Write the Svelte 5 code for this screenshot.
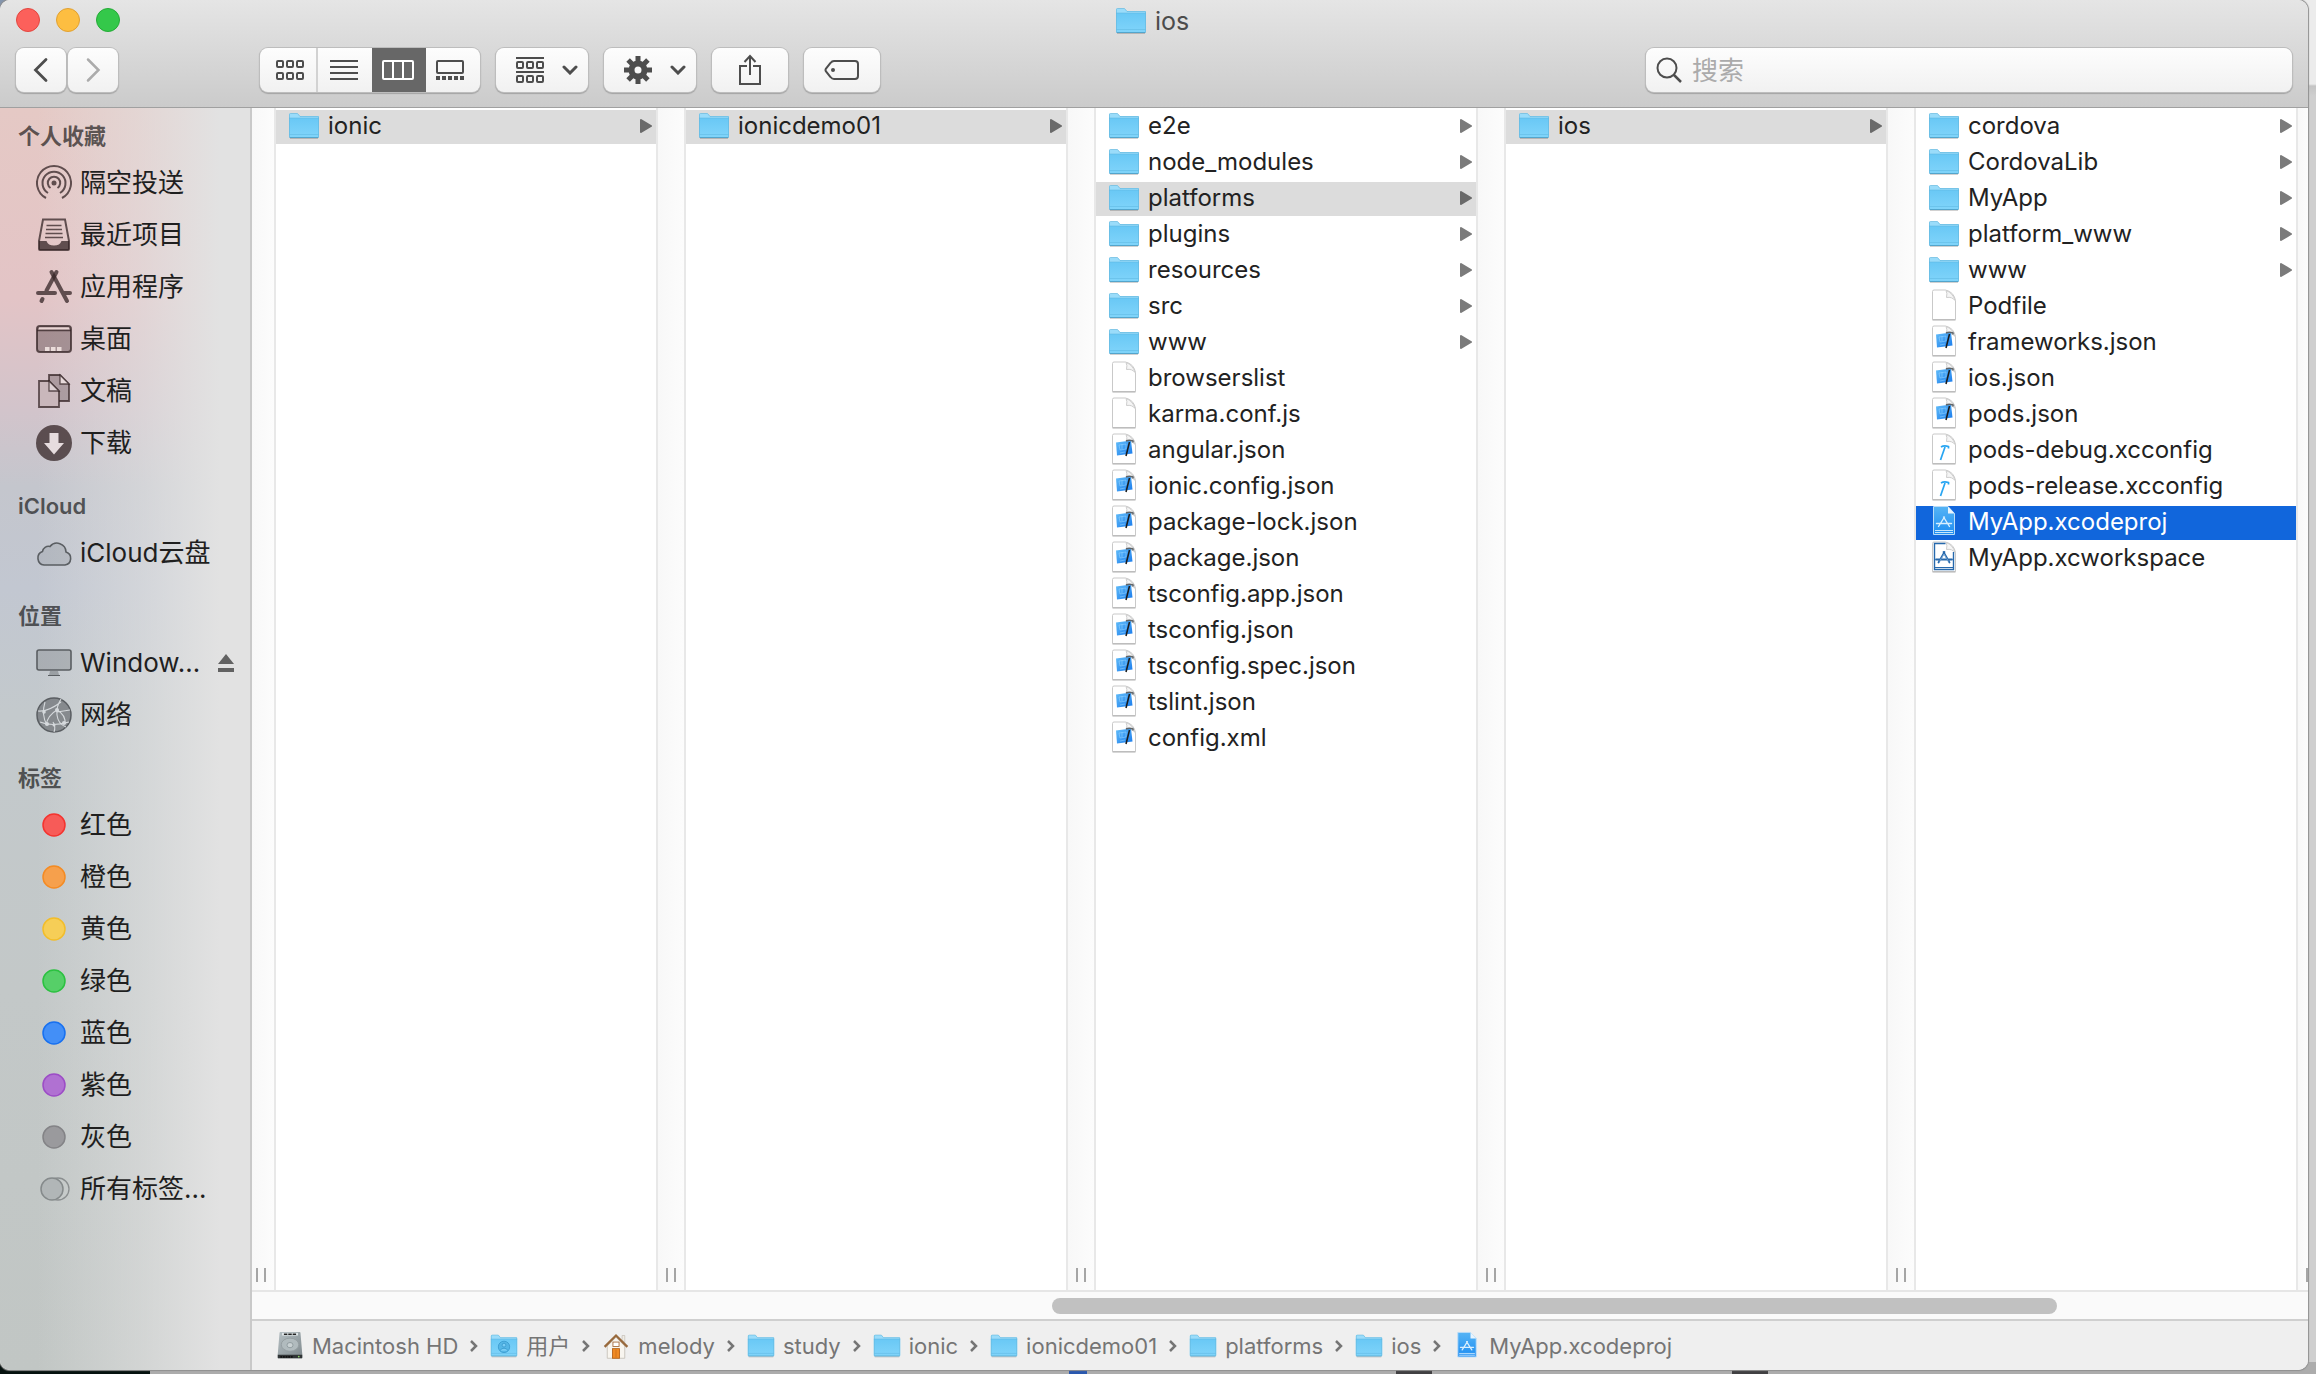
<script>
  const folder = (name) => ({ name, kind: 'folder' });
  const doc = (name) => ({ name, kind: 'doc' });
  const json = (name) => ({ name, kind: 'json' });

  const columns = [
    { current: 'ionic', items: [folder('ionic')] },
    { current: 'ionicdemo01', items: [folder('ionicdemo01')] },
    {
      current: 'platforms',
      items: [
        ...['e2e', 'node_modules', 'platforms', 'plugins', 'resources', 'src', 'www'].map(folder),
        ...['browserslist', 'karma.conf.js'].map(doc),
        ...['angular.json', 'ionic.config.json', 'package-lock.json', 'package.json', 'tsconfig.app.json',
          'tsconfig.json', 'tsconfig.spec.json', 'tslint.json', 'config.xml'].map(json)
      ]
    },
    { current: 'ios', items: [folder('ios')] },
    {
      focused: true,
      current: 'MyApp.xcodeproj',
      items: [
        ...['cordova', 'CordovaLib', 'MyApp', 'platform_www', 'www'].map(folder),
        doc('Podfile'),
        ...['frameworks.json', 'ios.json', 'pods.json'].map(json),
        { name: 'pods-debug.xcconfig', kind: 'config' },
        { name: 'pods-release.xcconfig', kind: 'config' },
        { name: 'MyApp.xcodeproj', kind: 'project' },
        { name: 'MyApp.xcworkspace', kind: 'workspace' }
      ]
    }
  ];

  const sections = [
    {
      title: '个人收藏',
      items: [
        { name: '隔空投送', kind: 'airdrop' },
        { name: '最近项目', kind: 'recents' },
        { name: '应用程序', kind: 'apps' },
        { name: '桌面', kind: 'desktop' },
        { name: '文稿', kind: 'documents' },
        { name: '下载', kind: 'downloads' }
      ]
    },
    { title: 'iCloud', items: [{ name: 'iCloud云盘', kind: 'cloud' }] },
    {
      title: '位置',
      items: [
        { name: 'Window…', kind: 'display', eject: true },
        { name: '网络', kind: 'network' }
      ]
    },
    {
      title: '标签',
      items: [
        { name: '红色', kind: 'tag', color: 'red' },
        { name: '橙色', kind: 'tag', color: 'orange' },
        { name: '黄色', kind: 'tag', color: 'yellow' },
        { name: '绿色', kind: 'tag', color: 'green' },
        { name: '蓝色', kind: 'tag', color: 'blue' },
        { name: '紫色', kind: 'tag', color: 'purple' },
        { name: '灰色', kind: 'tag', color: 'gray' },
        { name: '所有标签…', kind: 'alltags' }
      ]
    }
  ];

  const path = [
    { name: 'Macintosh HD', kind: 'disk' },
    { name: '用户', kind: 'users' },
    { name: 'melody', kind: 'home' },
    folder('study'),
    folder('ionic'),
    folder('ionicdemo01'),
    folder('platforms'),
    folder('ios'),
    { name: 'MyApp.xcodeproj', kind: 'project' }
  ];
</script>

<svg class="defs" aria-hidden="true">
  <defs>
    <linearGradient id="folder-front" x1="0" y1="0" x2="0" y2="1">
      <stop offset="0" stop-color="#69c8f5" /><stop offset="1" stop-color="#80d4fa" />
    </linearGradient>
    <linearGradient id="project-fill" x1="0" y1="0" x2="0" y2="1">
      <stop offset="0" stop-color="#55b4f5" /><stop offset="1" stop-color="#1e8df2" />
    </linearGradient>
    <linearGradient id="blueprint" x1="0" y1="0" x2="1" y2="1">
      <stop offset="0" stop-color="#62bdf9" /><stop offset="1" stop-color="#1a7cec" />
    </linearGradient>
    <linearGradient id="disk-body" x1="0" y1="0" x2="1" y2="1">
      <stop offset="0" stop-color="#b5bfc3" /><stop offset="1" stop-color="#7f898d" />
    </linearGradient>
  </defs>
</svg>

{#snippet page()}
  <path d="M4.5 2.5a1.5 1.5 0 0 1 1.500-1.500H17.500Q26 3 27.500 11.500V30.500H4.500Z" fill="#fff" stroke="#c9c9c9" />
  <path d="M18 1.500Q19.500 4 18.500 8.500Q24 7.500 27 11.500Q25 4 18 1.500Z" fill="#f5f5f5" stroke="#cdcdcd" />
  <path d="M4.500 31H27.500" stroke="#b0b0b0" />
{/snippet}

{#snippet fileIcon(kind)}
  <svg class="file-icon" viewBox="0 0 32 34" aria-hidden="true">
    {#if kind === 'folder' || kind === 'users'}
      <path d="M2 29.500H30" stroke="#000" stroke-opacity=".18" />
      <path d="M1 28V5.500Q1 4.500 2 4.500H9.500L12 7H30Q31 7 31 8V28Z" fill="#9adcfa" />
      <path d="M1 9H31V27.500Q31 28.500 30 28.500H2Q1 28.500 1 27.500Z" fill="url(#folder-front)" />
      <path d="M1.500 28V5.500Q1.500 4.500 2.500 4.500H9.500L12 7.500H30.500V28" fill="none" stroke="#66b9df" stroke-opacity=".7" />
      <path d="M1 9H31M1.500 25.500H30.500" stroke="#5bb5e0" stroke-opacity=".5" />
      <path d="M1.500 28.500H30.500" stroke="#53a5cc" />
      {#if kind === 'users'}
        <circle cx="16" cy="18" r="6.500" fill="#55b6e6" stroke="#3b9bd0" />
        <circle cx="16" cy="16" r="2.200" fill="#79cdf6" stroke="#3b9bd0" />
        <path d="M11.500 22.500Q12.500 19.500 16 19.500T20.500 22.500" fill="#79cdf6" stroke="#3b9bd0" />
      {/if}
    {:else if kind === 'project'}
      <path d="M5.500 1.500H20L26.500 8.500V29.500H5.500Z" fill="url(#project-fill)" stroke="#b9dcf8" />
      <path d="M20 1.500V8.500H26.500Z" fill="#e8f4fd" />
      <path d="M7 25.500H25M7 27.500H25" stroke="#c8e6fc" />
      <path d="M16.500 12L10.500 21.500M15.500 12L21.500 21.500M8.500 18.500H23.500" stroke="#d9effe" stroke-width="1.400" fill="none" stroke-linecap="round" />
    {:else if kind === 'disk'}
      <path d="M4 2Q4 1 5 1H27Q28 1 28 2L30 26V30Q30 31 29 31H3Q2 31 2 30V26Z" fill="url(#disk-body)" />
      <path d="M2 27H30V30Q30 31 29 31H3Q2 31 2 30Z" fill="#303436" />
      <path d="M7 3.500H25" stroke="#e7edef" stroke-width="3" />
      <path d="M9 3.500H23" stroke="#222" stroke-width="1.800" stroke-dasharray="4 1" />
      <ellipse cx="16" cy="15.500" rx="10" ry="7.500" fill="#b1bbbe" stroke="#939da0" />
      <ellipse cx="16" cy="16" rx="3.500" ry="3" fill="#c9d1d3" stroke="#8c979a" />
      <path d="M5 29.500H20" stroke="#111" stroke-width="2" stroke-dasharray="2 1" />
      <circle cx="26" cy="29" r="1" fill="#8fd06c" />
    {:else if kind === 'home'}
      <path d="M6 17L16 7L26 17V31H6Z" fill="#f8f5ef" stroke="#c6c1b8" />
      <path d="M23 5H26V13L23 10Z" fill="#efece5" stroke="#bdb7ac" stroke-width=".7" />
      <path d="M3 18L16 5L29 18" fill="none" stroke="#98693c" stroke-width="2.600" />
      <rect x="12.500" y="12.500" width="7" height="5" fill="#fff" stroke="#a2693a" />
      <rect x="12" y="20" width="8" height="11" fill="#f08a24" stroke="#b46117" />
      <path d="M16 21V30" stroke="#c56b18" stroke-width=".8" />
    {:else}
      {@render page()}
      {#if kind === 'json'}
        <path d="M8 9.500L23 7.500L24.500 20.500L9 22.500Z" fill="url(#blueprint)" />
        <path d="M11 12L18 11V16L12 17ZM12 20L17 19M14 11V16" fill="none" stroke="#8fd0ff" stroke-width=".6" />
        <path d="M21.500 9L18 23" stroke="#1b1b1b" stroke-width="1.600" />
        <path d="M18 8Q21 6.500 25 8V9.500" fill="none" stroke="#5f6468" stroke-width="1.500" />
      {:else if kind === 'config'}
        <path d="M17 14L12.500 27" stroke="#27a5f2" stroke-width="1.700" fill="none" />
        <path d="M13 14Q16 12 20.500 13.500V15.500" stroke="#27a5f2" stroke-width="1.700" fill="none" />
      {:else if kind === 'workspace'}
        <path d="M17.500 2.500H6.500V28.500H25.500V11" fill="none" stroke="#2668ac" stroke-width="1.400" />
        <path d="M7 26.500H25" stroke="#2668ac" />
        <path d="M16.500 11L10.500 21.500M15.500 11L21.500 21.500M8 18.500H24" stroke="#2668ac" stroke-width="1.800" fill="none" stroke-linecap="round" />
        <path d="M16 13L11.500 20.500M16 13L20.500 20.500" stroke="#9cc3e6" stroke-width=".6" />
      {/if}
    {/if}
  </svg>
{/snippet}

{#snippet sideIcon(kind, color)}
  <svg class="side-icon {color ?? ''}" viewBox="0 0 36 36" fill="none" stroke="currentColor" stroke-width="2" aria-hidden="true">
    {#if kind === 'airdrop'}
      <circle cx="18" cy="18" r="2.500" fill="currentColor" stroke="none" />
      <path d="M14.500 23A6.200 6.200 0 1 1 21.500 23" />
      <path d="M12 28A11.500 11.500 0 1 1 24 28" />
      <path d="M10 33A17 17 0 1 1 26 33" />
    {:else if kind === 'recents'}
      <path d="M7 2.500H29L33 24V32Q33 33 32 33H4Q3 33 3 32V24Z" />
      <path d="M3 24H10.500Q12 28.500 18 28.500T25.500 24H33V33H3Z" fill="currentColor" stroke="none" />
      <path d="M10.500 8.500H25.500M10 12.500H26M9.500 16.500H26.500M9 20.500H27" stroke-width="1.600" />
    {:else if kind === 'apps'}
      <g stroke-width="4" stroke-linecap="round">
        <path d="M20.500 3L10.500 21.500M2 24H19M6.500 30L5.500 32" />
        <path d="M15.500 3L31 32M27 24H34" />
      </g>
    {:else if kind === 'desktop'}
      <rect x="1" y="5" width="34" height="26" rx="3" fill="currentColor" fill-opacity=".45" />
      <path d="M3 7.500H33" stroke="#ead7d5" stroke-width="2" />
      <path d="M1 9.500H35" stroke-width="1.500" />
      <path d="M9 28H27" stroke="#eadcda" stroke-width="4" stroke-dasharray="4.500 1.500" />
    {:else if kind === 'documents'}
      <path d="M13 2H24L33 11V28H13Z" fill="currentColor" fill-opacity=".35" stroke-width="1.800" />
      <path d="M24 2V11H33Z" fill="#e8dadb" stroke-width="1.300" />
      <path d="M3 8H13L23 18V34H3Z" fill="#c9b7bb" stroke-width="1.800" />
      <path d="M13 8V18H23Z" fill="#ddd0d3" stroke-width="1.300" />
    {:else if kind === 'downloads'}
      <circle cx="18" cy="18" r="18" fill="currentColor" stroke="none" />
      <path d="M13.500 8H22.500V18H28L18 29.500L8 18H13.500Z" fill="#e6dcde" stroke="none" />
    {:else if kind === 'cloud'}
      <path d="M8 30A7 7 0 0 1 6.500 16.500A6 6 0 0 1 14 11.500A9 9 0 0 1 30 17A6.700 6.700 0 0 1 29 30Z" fill="currentColor" fill-opacity=".15" stroke-width="1.600" />
    {:else if kind === 'display'}
      <rect x="1" y="5" width="34" height="20" rx="2" fill="currentColor" fill-opacity=".25" stroke-width="1.600" />
      <path d="M14 26H22L23 30H13Z" fill="currentColor" fill-opacity=".4" stroke="none" />
      <path d="M12 30.500H24" stroke-width="1" />
    {:else if kind === 'network'}
      <circle cx="18" cy="18" r="17" fill="currentColor" fill-opacity=".6" stroke-width="1.500" />
      <g stroke="#d5d9dc" stroke-width="1.100">
        <path d="M25 2Q20 10 21 18Q22 27 30 30M2 14Q12 15 25 5M4 25Q16 30 33 25M9 5Q5 18 11 28M21 13Q12 18 10 28M21 13Q30 18 29 27M18 35Q20 30 17 25M21 15L34 13" />
      </g>
      <g fill="#d5d9dc" stroke="none">
        <circle cx="21" cy="13" r="2" /><circle cx="8" cy="15" r="1.800" /><circle cx="11" cy="27" r="2" /><circle cx="28" cy="26" r="2" /><circle cx="18" cy="28" r="1.500" />
      </g>
    {:else if kind === 'tag'}
      <circle cx="18" cy="18" r="11" fill="currentColor" stroke="var(--ring)" stroke-width="1.500" />
    {:else if kind === 'alltags'}
      <circle cx="22" cy="18" r="11" stroke="#8b8f90" stroke-width="1.300" />
      <circle cx="16" cy="18" r="11" fill="#b1b6b7" stroke="#858a8b" stroke-width="1.500" />
    {/if}
  </svg>
{/snippet}

{#snippet caret()}
  <svg class="caret" viewBox="0 0 16 10" fill="none" stroke="currentColor" stroke-width="3" stroke-linecap="round" aria-hidden="true">
    <path d="M2 2L8 8L14 2" />
  </svg>
{/snippet}

<div class="screen">
  <main class="window">
    <header>
      <div class="titlebar">
        <div class="lights">
          <button class="light close" aria-label="关闭"></button>
          <button class="light minimize" aria-label="最小化"></button>
          <button class="light zoom" aria-label="缩放"></button>
        </div>
        <h1>{@render fileIcon('folder')}<span>ios</span></h1>
        <div></div>
      </div>
      <div class="toolbar">
        <div class="nav">
          <button class="tool" aria-label="后退">
            <svg width="16" height="26" viewBox="0 0 16 26" fill="none" stroke="currentColor" stroke-width="2.800" stroke-linecap="round"><path d="M13 2.500L2.500 13L13 23.500" /></svg>
          </button>
          <button class="tool faded" aria-label="前进">
            <svg width="16" height="26" viewBox="0 0 16 26" fill="none" stroke="currentColor" stroke-width="2.500" stroke-linecap="round"><path d="M3 2.500L13.500 13L3 23.500" /></svg>
          </button>
        </div>
        <div class="segments">
          <button aria-label="图标">
            <svg width="28" height="20" viewBox="0 0 28 20" fill="none" stroke="currentColor" stroke-width="2">
              {#each [1, 11, 21] as x}{#each [1, 13] as y}<rect {x} {y} width="6" height="6" rx="1" />{/each}{/each}
            </svg>
          </button>
          <button aria-label="列表">
            <svg width="28" height="20" viewBox="0 0 28 20" stroke="currentColor" stroke-width="2"><path d="M0 1H28M0 7H28M0 13H28M0 19H28" /></svg>
          </button>
          <button class="pressed" aria-label="分栏" aria-pressed="true">
            <svg width="32" height="20" viewBox="0 0 32 20" fill="none" stroke="currentColor" stroke-width="2"><rect x="1" y="1" width="30" height="18" rx="1" /><path d="M11 1V19M21 1V19" /></svg>
          </button>
          <button aria-label="画廊">
            <svg width="28" height="20" viewBox="0 0 28 20" fill="none" stroke="currentColor" stroke-width="2"><rect x="1" y="1" width="26" height="12" rx="1" /><path d="M0 18H28" stroke-width="4" stroke-dasharray="4 2" /></svg>
          </button>
        </div>
        <button class="tool menu" aria-label="分组">
          <svg width="28" height="26" viewBox="0 0 28 26" fill="none" stroke="currentColor" stroke-width="2">
            <path d="M0 1H28M0 15H28" />
            {#each [1, 11, 21] as x}{#each [5, 19] as y}<rect {x} {y} width="6" height="6" rx="1" />{/each}{/each}
          </svg>
          {@render caret()}
        </button>
        <button class="tool menu" aria-label="操作">
          <svg width="28" height="28" viewBox="-14 -14 28 28" fill="none" stroke="currentColor">
            <circle r="6.500" stroke-width="6" />
            {#each [0, 45, 90, 135] as a}<path d="M0 -14V-8M0 8V14" stroke-width="5" transform="rotate({a})" />{/each}
          </svg>
          {@render caret()}
        </button>
        <button class="tool wide" aria-label="共享">
          <svg width="24" height="32" viewBox="0 0 24 32" fill="none" stroke="currentColor" stroke-width="2"><path d="M9 12H2V30H22V12H15M12 21V2M6.500 8L12 2L17.500 8" /></svg>
        </button>
        <button class="tool wide" aria-label="编辑标签">
          <svg width="36" height="22" viewBox="0 0 36 22" fill="none" stroke="currentColor" stroke-width="2"><path d="M10 2H31Q34 2 34 5V17Q34 20 31 20H10Q8 20 6.500 18L2 12.500Q1 11 2 9.500L6.500 4Q8 2 10 2Z" /><circle cx="9" cy="11" r="2" fill="currentColor" stroke="none" /></svg>
        </button>
        <label class="search">
          <svg width="26" height="26" viewBox="0 0 26 26" fill="none" stroke="currentColor" stroke-width="2"><circle cx="11" cy="11" r="9.500" /><path d="M17.500 17.500L25 25" stroke-width="2.500" /></svg>
          <input type="search" placeholder="搜索" aria-label="搜索" />
        </label>
      </div>
    </header>

    <div class="body">
      <nav class="sidebar">
        {#each sections as section}
          <section>
            <h2>{section.title}</h2>
            <ul>
              {#each section.items as item}
                <li>
                  <a href="#{item.name}">{@render sideIcon(item.kind, item.color)}<span>{item.name}</span></a>
                  {#if item.eject}
                    <button class="eject" aria-label="推出">
                      <svg width="16" height="18" viewBox="0 0 16 18" fill="currentColor"><path d="M8 0L16 10H0ZM0 14H16V18H0Z" /></svg>
                    </button>
                  {/if}
                </li>
              {/each}
            </ul>
          </section>
        {/each}
      </nav>

      <div class="content">
        <div class="browser">
          <div class="gutter first"><i></i></div>
          {#each columns as column}
            <ul class="column">
              {#each column.items as item}
                <li>
                  <button class="row" class:current={item.name === column.current} class:focused={column.focused && item.name === column.current}>
                    {@render fileIcon(item.kind)}
                    <span>{item.name}</span>
                    {#if item.kind === 'folder'}
                      <svg class="arrow" viewBox="0 0 12 14" aria-hidden="true"><path d="M1 1L11 7L1 13Z" fill="currentColor" stroke="currentColor" stroke-linejoin="round" stroke-width="2" /></svg>
                    {/if}
                  </button>
                </li>
              {/each}
            </ul>
            <div class="gutter"><i></i></div>
          {/each}
        </div>
        <div class="track"><div class="thumb"></div></div>
        <footer>
          {#each path as part, i}
            {#if i > 0}
              <svg class="chevron" viewBox="0 0 8 14" fill="none" stroke="currentColor" stroke-width="2.500" aria-hidden="true"><path d="M1 2L6 7L1 12" /></svg>
            {/if}
            <a href="#path-{i}">{@render fileIcon(part.kind)}<span>{part.name}</span></a>
          {/each}
        </footer>
      </div>
    </div>
  </main>
</div>

<style>
  :global(body) {
    background: #acacac;
  }
  .screen {
    box-sizing: border-box;
    min-height: 100vh;
    display: flex;
    padding: 0 8px 4px 0;
    font-family: Inter, 'Noto Sans CJK SC', sans-serif;
    color: #222;
    background:
      linear-gradient(#ececec 84px, #c4c4c4 86px, #cfcfcf 96px) right top / 30px calc(100% - 12px) no-repeat,
      linear-gradient(90deg, #06120f 150px, #acacac 150px, #acacac 1069px, #2a58ae 1069px, #2a58ae 1087px, #acacac 1087px,
        #acacac 1396px, #414042 1396px, #414042 1432px, #acacac 1432px, #acacac 1732px, #414042 1732px, #414042 1768px,
        #acacac 1768px) left bottom / 100% 16px no-repeat,
      #8495ad;
  }
  .defs {
    position: absolute;
    width: 0;
    height: 0;
  }
  button {
    font: inherit;
    color: inherit;
    border: 0;
    padding: 0;
    background: none;
  }
  a {
    color: inherit;
    text-decoration: none;
  }
  ul {
    list-style: none;
    margin: 0;
    padding: 0;
  }
  svg {
    flex: none;
  }
  .window {
    flex: 1;
    min-width: 0;
    display: flex;
    flex-direction: column;
    border-radius: 10px;
    overflow: hidden;
    background: #fff;
    box-shadow: 0 0 1px 1px #8f8f8f;
  }
  header {
    background: linear-gradient(#e5e5e5, #cbcbcb);
    border-bottom: 1px solid #a0a0a0;
    color: #4c4c4c;
  }
  .titlebar {
    height: 40px;
    display: grid;
    grid-template-columns: 1fr auto 1fr;
    align-items: center;
    padding: 0 20px 0 16px;
  }
  .lights {
    display: flex;
    gap: 16px;
  }
  .light {
    width: 24px;
    height: 24px;
    border-radius: 50%;
    border: 1px solid;
  }
  .close {
    background: #fc605b;
    border-color: #e2463f;
  }
  .minimize {
    background: #fdbe41;
    border-color: #e0a032;
  }
  .zoom {
    background: #34c84a;
    border-color: #25ab37;
  }
  h1 {
    margin: 0;
    padding-top: 2px;
    display: flex;
    align-items: center;
    gap: 8px;
    font-size: 25px;
    line-height: 32px;
    font-weight: 400;
  }
  .toolbar {
    display: flex;
    gap: 16px;
    padding: 8px 16px 15px;
  }
  .nav {
    display: flex;
    gap: 2px;
    margin-right: 126px;
  }
  .tool,
  .segments,
  .search {
    height: 44px;
    border-radius: 8px;
    background: linear-gradient(#fdfdfd, #f1f1f1);
    box-shadow: 0 0 0 1px #bdbdbd, 0 1px 1px 1px #a3a3a3;
    display: flex;
    align-items: center;
    justify-content: center;
    color: #4d4d4d;
  }
  .tool {
    width: 50px;
  }
  .tool.faded {
    color: #ababab;
  }
  .tool.menu {
    width: 92px;
    gap: 18px;
    padding-left: 10px;
  }
  .tool.wide {
    width: 76px;
  }
  .caret {
    width: 16px;
    height: 10px;
  }
  .segments {
    overflow: hidden;
  }
  .segments button {
    box-sizing: border-box;
    width: 54px;
    height: 44px;
    display: flex;
    align-items: center;
    justify-content: center;
    padding-right: 2px;
  }
  .segments button:first-child {
    width: 58px;
    padding: 0 0 0 4px;
    border-right: 2px solid #d2d2d2;
  }
  .segments button:last-child {
    padding-right: 6px;
  }
  .segments .pressed {
    background: #676767;
    color: #fff;
  }
  .search {
    flex: 0 1 646px;
    box-sizing: border-box;
    margin-left: auto;
    padding: 0 10px;
    gap: 10px;
  }
  .search input {
    flex: 1;
    min-width: 0;
    border: 0;
    padding: 2px 0 0;
    outline: 0;
    background: none;
    font: inherit;
    font-size: 26px;
    line-height: 36px;
    appearance: none;
  }
  .search input::placeholder {
    color: #ababab;
  }
  .body {
    flex: 1;
    display: flex;
    min-height: 0;
  }
  .sidebar {
    flex: 0 0 250px;
    border-right: 2px solid #c9c9c9;
    background:
      linear-gradient(90deg, transparent 15%, rgba(226, 226, 226, 0.5) 55%, #e2e2e2 88%),
      linear-gradient(#e5c9c5, #e3c4c6 15%, #d2c4cb 24%, #c4c6cd 30%, #c2c7d1 38%, #c3c9cc 48%, #c3c8c8 70%, #c1c6c4);
    color: #1f1f1f;
  }
  h2 {
    box-sizing: border-box;
    height: 58px;
    margin: 0;
    padding: 21px 18px 0;
    font-size: 22px;
    line-height: 32px;
    font-weight: 600;
    color: rgba(0, 0, 0, 0.62);
  }
  section:first-child h2 {
    height: 49px;
    padding-top: 12px;
  }
  .sidebar li {
    display: flex;
    align-items: center;
    height: 52px;
    padding: 0 16px 0 36px;
  }
  .sidebar a {
    flex: 1;
    display: flex;
    align-items: center;
    gap: 8px;
    font-size: 26px;
    line-height: 36px;
    white-space: nowrap;
  }
  .side-icon {
    width: 36px;
    height: 36px;
    color: rgba(52, 36, 38, 0.75);
  }
  section:nth-child(n + 2) .side-icon {
    color: #5a5e62;
  }
  section .side-icon.red { color: #f75b58; --ring: #f4332f; }
  section .side-icon.orange { color: #f6a04c; --ring: #f48b23; }
  section .side-icon.yellow { color: #f6ce57; --ring: #f2bd2a; }
  section .side-icon.green { color: #56cf68; --ring: #2bc140; }
  section .side-icon.blue { color: #438ff7; --ring: #1770f0; }
  section .side-icon.purple { color: #b071d2; --ring: #9c4cc6; }
  section .side-icon.gray { color: #9a9a9d; --ring: #838386; }
  section:nth-child(n) .red { color: #f75b58; }
  section:nth-child(n) .side-icon.orange { color: #f6a04c; }
  .eject {
    color: #626262;
    display: flex;
  }
  .content {
    flex: 1;
    min-width: 0;
    display: flex;
    flex-direction: column;
  }
  .browser {
    flex: 1;
    display: flex;
    overflow: hidden;
  }
  .column {
    flex: 1;
    min-width: 0;
    padding-top: 2px;
    background: #fff;
  }
  .column li {
    height: 36px;
  }
  .gutter {
    box-sizing: border-box;
    flex: 0 0 30px;
    border: solid #e8e8e8;
    border-width: 0 2px;
    background: linear-gradient(90deg, #f8f8f8, #fcfcfc);
    display: flex;
    align-items: flex-end;
    padding: 0 0 8px 8px;
  }
  .gutter.first {
    flex-basis: 24px;
    border-left: 0;
    padding-left: 4px;
  }
  .gutter:last-child {
    flex-basis: 12px;
    border-right: 0;
    overflow: hidden;
  }
  .gutter i {
    flex: none;
    box-sizing: border-box;
    width: 10px;
    height: 14px;
    border: solid #a5a5a5;
    border-width: 0 2px;
  }
  .row {
    box-sizing: border-box;
    width: 100%;
    height: 34px;
    display: flex;
    align-items: center;
    gap: 8px;
    padding: 0 4px 2px 12px;
    font-size: 24px;
    line-height: 34px;
    text-align: left;
  }
  .row span {
    flex: 1;
    white-space: nowrap;
  }
  .row.current {
    background: #dcdcdc;
  }
  .row.focused {
    background: #1166dc;
    color: #fff;
  }
  .file-icon {
    width: 32px;
    height: 34px;
  }
  .arrow {
    width: 12px;
    height: 14px;
    color: #7b7b7b;
  }
  .current .arrow {
    color: #6a6a6a;
  }
  .track {
    box-sizing: border-box;
    height: 29px;
    border-top: 2px solid #e6e6e6;
    background: #fafafa;
    padding-top: 6px;
  }
  .thumb {
    width: 48.9%;
    height: 16px;
    margin-left: 38.9%;
    border-radius: 8px;
    background: #c1c1c1;
  }
  footer {
    box-sizing: border-box;
    height: 51px;
    display: flex;
    align-items: center;
    border-top: 2px solid #cfcfcf;
    background: #efefef;
    padding-left: 24px;
    color: #757575;
    font-size: 22px;
    line-height: 32px;
    white-space: nowrap;
  }
  footer a {
    display: flex;
    align-items: center;
    gap: 8px;
  }
  footer .file-icon {
    width: 28px;
    height: 30px;
  }
  .chevron {
    width: 8px;
    height: 14px;
    margin: 0 12px;
  }
</style>
